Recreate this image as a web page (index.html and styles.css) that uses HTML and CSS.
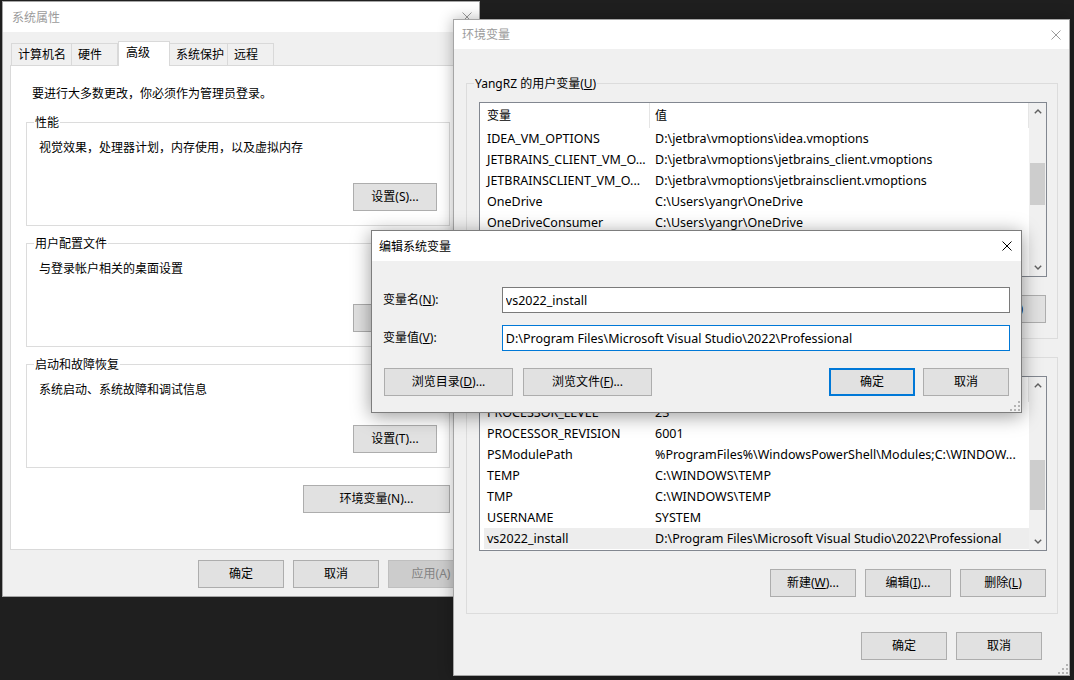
FILE: index.html
```html
<!DOCTYPE html>
<html lang="zh-CN">
<head>
    <meta charset="UTF-8">
    <title>环境变量</title>
    <link rel="stylesheet" href="styles.css">
</head>
<body>

    <!-- 系统属性 -->
    <div class="window win-sys inactive">
        <div class="titlebar">
            <span class="title">系统属性</span>
            <svg class="close" viewBox="0 0 10 10"><path d="M0.5 0.5L9.5 9.5M9.5 0.5L0.5 9.5"/></svg>
        </div>
        <div class="tabs">
            <div class="tab">计算机名</div>
            <div class="tab">硬件</div>
            <div class="tab active">高级</div>
            <div class="tab">系统保护</div>
            <div class="tab">远程</div>
        </div>
        <div class="tab-panel">
            <p class="note">要进行大多数更改，你必须作为管理员登录。</p>
            <div class="group sys-group">
                <span class="group-label">性能</span>
                <p>视觉效果，处理器计划，内存使用，以及虚拟内存</p>
                <div class="btn-row"><button class="btn btn-s">设置(S)...</button></div>
            </div>
            <div class="group sys-group">
                <span class="group-label">用户配置文件</span>
                <p>与登录帐户相关的桌面设置</p>
                <div class="btn-row"><button class="btn btn-s">设置(E)...</button></div>
            </div>
            <div class="group sys-group">
                <span class="group-label">启动和故障恢复</span>
                <p>系统启动、系统故障和调试信息</p>
                <div class="btn-row"><button class="btn btn-s">设置(T)...</button></div>
            </div>
            <div class="btn-row env-btn-row">
                <button class="btn btn-env">环境变量(N)...</button>
            </div>
        </div>
        <div class="btn-row sys-footer">
            <button class="btn">确定</button>
            <button class="btn">取消</button>
            <button class="btn" disabled>应用(A)</button>
        </div>
    </div>

    <!-- 环境变量 -->
    <div class="window win-env inactive">
        <div class="titlebar">
            <span class="title">环境变量</span>
            <svg class="close" viewBox="0 0 10 10"><path d="M0.5 0.5L9.5 9.5M9.5 0.5L0.5 9.5"/></svg>
        </div>

        <div class="group env-group">
            <span class="group-label">YangRZ 的用户变量(<u>U</u>)</span>
            <div class="list">
                <div class="list-main">
                    <div class="list-head">
                        <div class="head-name">变量</div>
                        <div class="head-value">值</div>
                    </div>
                    <div class="row"><span class="cell-name">IDEA_VM_OPTIONS</span><span class="cell-value">D:\jetbra\vmoptions\idea.vmoptions</span></div>
                    <div class="row"><span class="cell-name">JETBRAINS_CLIENT_VM_O...</span><span class="cell-value">D:\jetbra\vmoptions\jetbrains_client.vmoptions</span></div>
                    <div class="row"><span class="cell-name">JETBRAINSCLIENT_VM_O...</span><span class="cell-value">D:\jetbra\vmoptions\jetbrainsclient.vmoptions</span></div>
                    <div class="row"><span class="cell-name">OneDrive</span><span class="cell-value">C:\Users\yangr\OneDrive</span></div>
                    <div class="row"><span class="cell-name">OneDriveConsumer</span><span class="cell-value">C:\Users\yangr\OneDrive</span></div>
                    <div class="row"><span class="cell-name">Path</span><span class="cell-value">C:\Users\yangr\AppData\Local\Microsoft\WindowsApps;</span></div>
                    <div class="row"><span class="cell-name">TEMP</span><span class="cell-value">C:\Users\yangr\AppData\Local\Temp</span></div>
                </div>
                <div class="scrollbar">
                    <div class="sb-arrow"><svg class="chev" viewBox="0 0 8 5"><polyline points="0.8,4.3 4,1.1 7.2,4.3"/></svg></div>
                    <div class="sb-track"><div class="sb-thumb thumb-user"></div></div>
                    <div class="sb-arrow"><svg class="chev" viewBox="0 0 8 5"><polyline points="0.8,0.7 4,3.9 7.2,0.7"/></svg></div>
                </div>
            </div>
            <div class="btn-row list-btns">
                <button class="btn">新建(<u>N</u>)...</button>
                <button class="btn">编辑(<u>E</u>)...</button>
                <button class="btn">删除(<u>D</u>)</button>
            </div>
        </div>

        <div class="group env-group">
            <span class="group-label">系统变量(<u>S</u>)</span>
            <div class="list">
                <div class="list-main">
                    <div class="list-head">
                        <div class="head-name">变量</div>
                        <div class="head-value">值</div>
                    </div>
                    <div class="row"><span class="cell-name">PROCESSOR_LEVEL</span><span class="cell-value">23</span></div>
                    <div class="row"><span class="cell-name">PROCESSOR_REVISION</span><span class="cell-value">6001</span></div>
                    <div class="row"><span class="cell-name">PSModulePath</span><span class="cell-value">%ProgramFiles%\WindowsPowerShell\Modules;C:\WINDOW...</span></div>
                    <div class="row"><span class="cell-name">TEMP</span><span class="cell-value">C:\WINDOWS\TEMP</span></div>
                    <div class="row"><span class="cell-name">TMP</span><span class="cell-value">C:\WINDOWS\TEMP</span></div>
                    <div class="row"><span class="cell-name">USERNAME</span><span class="cell-value">SYSTEM</span></div>
                    <div class="row selected"><span class="cell-name">vs2022_install</span><span class="cell-value">D:\Program Files\Microsoft Visual Studio\2022\Professional</span></div>
                </div>
                <div class="scrollbar">
                    <div class="sb-arrow"><svg class="chev" viewBox="0 0 8 5"><polyline points="0.8,4.3 4,1.1 7.2,4.3"/></svg></div>
                    <div class="sb-track"><div class="sb-thumb thumb-system"></div></div>
                    <div class="sb-arrow"><svg class="chev" viewBox="0 0 8 5"><polyline points="0.8,0.7 4,3.9 7.2,0.7"/></svg></div>
                </div>
            </div>
            <div class="btn-row list-btns">
                <button class="btn">新建(<u>W</u>)...</button>
                <button class="btn">编辑(<u>I</u>)...</button>
                <button class="btn">删除(<u>L</u>)</button>
            </div>
        </div>

        <div class="btn-row env-footer">
            <button class="btn">确定</button>
            <button class="btn">取消</button>
        </div>

        <svg class="grip" viewBox="0 0 10 10">
            <rect x="8" y="0" width="2" height="2"/><rect x="8" y="4" width="2" height="2"/><rect x="4" y="4" width="2" height="2"/>
            <rect x="8" y="8" width="2" height="2"/><rect x="4" y="8" width="2" height="2"/><rect x="0" y="8" width="2" height="2"/>
        </svg>
    </div>

    <!-- 编辑系统变量 -->
    <div class="window win-edit">
        <div class="titlebar">
            <span class="title">编辑系统变量</span>
            <svg class="close" viewBox="0 0 10 10"><path d="M0.5 0.5L9.5 9.5M9.5 0.5L0.5 9.5"/></svg>
        </div>
        <div class="edit-body">
            <div class="field-row">
                <label class="field-label">变量名(<u>N</u>):</label>
                <input class="field-input" type="text" value="vs2022_install">
            </div>
            <div class="field-row">
                <label class="field-label">变量值(<u>V</u>):</label>
                <input class="field-input focused" type="text" value="D:\Program Files\Microsoft Visual Studio\2022\Professional">
            </div>
            <div class="btn-row edit-btns">
                <button class="btn btn-wide">浏览目录(<u>D</u>)...</button>
                <button class="btn btn-wide">浏览文件(<u>F</u>)...</button>
                <button class="btn btn-default">确定</button>
                <button class="btn">取消</button>
            </div>
        </div>

        <svg class="grip" viewBox="0 0 10 10">
            <rect x="8" y="0" width="2" height="2"/><rect x="8" y="4" width="2" height="2"/><rect x="4" y="4" width="2" height="2"/>
            <rect x="8" y="8" width="2" height="2"/><rect x="4" y="8" width="2" height="2"/><rect x="0" y="8" width="2" height="2"/>
        </svg>
    </div>

</body>
</html>
```

FILE: styles.css
```css
* {
    margin: 0;
    padding: 0;
    box-sizing: border-box;
}

body {
    position: relative;
    width: 1074px;
    height: 680px;
    overflow: hidden;
    background-color: #1f1f1f; /* escritorio */
    font-family: "Noto Sans", "Noto Sans CJK SC", sans-serif;
    font-size: 12px;
    color: #000;
}

u {
    text-decoration: underline;
    text-underline-offset: 1px;
}

/* ventanas */
.window {
    position: absolute;
    display: flex;
    flex-direction: column;
    background-color: #f0f0f0;
    border: 1px solid #a5a5a5;
}

.titlebar {
    flex: none;
    display: flex;
    align-items: center;
    justify-content: space-between;
    background-color: #fff;
}

.title {
    line-height: 16px;
    padding-top: 1px;
}

.close {
    width: 10px;
    height: 10px;
    fill: none;
    stroke: #000;
    stroke-width: 1;
}

.inactive .title {
    color: #9b9b9b;
}

.inactive .close {
    stroke: #9b9b9b;
}

.grip {
    position: absolute;
    right: 1px;
    bottom: 1px;
    width: 10px;
    height: 10px;
    fill: #b4b4b4;
}

/* botones */
.btn-row {
    display: flex;
}

.btn {
    flex: none;
    width: 86px;
    height: 28px;
    padding: 0;
    font: inherit;
    line-height: 26px;
    color: #000;
    text-align: center;
    background-color: #e1e1e1;
    border: 1px solid #adadad;
    border-radius: 0;
}

.btn:disabled {
    color: #838383;
    background-color: #cccccc;
    border-color: #bfbfbf;
}

.btn-default {
    border: 2px solid #0078d7;
    line-height: 24px;
}

.btn-s {
    width: 84px;
}

.btn-env {
    width: 147px;
}

.btn-wide {
    width: 129px;
}

/* grupos */
.group {
    position: relative;
    border: 1px solid #dcdcdc;
}

.group-label {
    position: absolute;
    top: -8px;
    left: 7px;
    padding: 0 1px;
    line-height: 16px;
    background-color: #f0f0f0;
    white-space: nowrap;
}

/* ---------- 系统属性 ---------- */
.win-sys {
    left: 2px;
    top: 1px;
    width: 478px;
    height: 596px;
}

.win-sys .titlebar {
    height: 30px;
    padding: 0 7px 0 9px;
}

.tabs {
    position: relative;
    z-index: 1;
    display: flex;
    align-items: flex-end;
    height: 24px;
    margin: 9px 0 0 8px;
}

.tab {
    height: 22px;
    padding-left: 6px;
    line-height: 21px;
    background-color: #f0f0f0;
    border: 1px solid #d9d9d9;
    border-bottom: none;
    margin-left: -1px;
    white-space: nowrap;
}

.tab:nth-child(1) { width: 61px; margin-left: 0; }
.tab:nth-child(2) { width: 47px; }
.tab:nth-child(4) { width: 59px; }
.tab:nth-child(5) { width: 47px; }

.tab.active {
    width: 52px;
    height: 25px;
    margin-left: 0;
    margin-bottom: -1px;
    padding-left: 7px;
    line-height: 21px;
    background-color: #fff;
}

.tab-panel {
    width: 462px;
    height: 485px;
    margin-left: 7px;
    background-color: #fff;
    border: 1px solid #d9d9d9;
}

.note {
    margin-top: 20px;
    padding-left: 21px;
    line-height: 16px;
}

.sys-group {
    width: 424px;
    height: 104px;
    margin: 20px 0 0 15px;
    padding: 17px 12px 0;
}

.sys-group + .sys-group {
    margin-top: 17px;
}

.sys-group p {
    line-height: 16px;
}

.sys-group .group-label {
    background-color: #fff;
}

.sys-group .btn-row {
    justify-content: flex-end;
    margin-top: 27px;
}

.env-btn-row {
    width: 424px;
    margin: 17px 0 0 15px;
    justify-content: flex-end;
}

.sys-footer {
    gap: 9px;
    margin-top: 10px;
    padding-left: 195px;
}

/* ---------- 环境变量 ---------- */
.win-env {
    left: 453px;
    top: 19px;
    width: 617px;
    height: 657px;
    box-shadow: 0 0 14px rgba(0, 0, 0, 0.3);
}

.win-env .titlebar {
    height: 29px;
    padding: 0 8px;
}

.env-group {
    width: 592px;
    height: 256px;
    margin: 34px 0 0 12px;
    padding: 18px 0 0 12px;
}

.env-group + .env-group {
    height: 257px;
    margin-top: 18px;
}

.list {
    display: flex;
    width: 568px;
    height: 175px;
    font-size: 12.5px;
    background-color: #fff;
    border: 1px solid #828790;
    overflow: hidden;
}

.list-main {
    flex: 1;
    min-width: 0;
}

.list-head {
    display: flex;
    height: 25px;
    line-height: 25px;
    font-size: 12px;
}

.head-name {
    width: 170px;
    padding-left: 7px;
    border-right: 1px solid #e5e5e5;
}

.head-value {
    flex: 1;
    padding-left: 5px;
    border-right: 1px solid #e5e5e5;
}

.row {
    display: flex;
    height: 21px;
    margin-left: 4px;
    line-height: 22px;
    white-space: nowrap;
}

.row.selected {
    background-color: #ededed;
}

.cell-name {
    width: 165px;
    padding: 0 1px 0 3px;
    overflow: hidden;
}

.cell-value {
    flex: 1;
    min-width: 0;
    padding-left: 6px;
    overflow: hidden;
}

.scrollbar {
    display: flex;
    flex-direction: column;
    width: 17px;
    background-color: #f0f0f0;
}

.sb-arrow {
    display: flex;
    align-items: center;
    justify-content: center;
    height: 17px;
}

.chev {
    width: 8px;
    height: 5px;
    fill: none;
    stroke: #606060;
    stroke-width: 1.4;
}

.sb-track {
    flex: 1;
}

.sb-thumb {
    margin: 0 1px;
    background-color: #cdcdcd;
}

.thumb-user {
    height: 42px;
    margin-top: 43px;
}

.thumb-system {
    height: 50px;
    margin-top: 66px;
}

.list-btns {
    width: 568px;
    gap: 9px;
    margin-top: 18px;
    padding-right: 1px;
    justify-content: flex-end;
}

.env-footer {
    gap: 9px;
    margin-top: 18px;
    padding-right: 27px;
    justify-content: flex-end;
}

/* ---------- 编辑系统变量 ---------- */
.win-edit {
    left: 371px;
    top: 230px;
    width: 651px;
    height: 183px;
    border-color: #7d7d7d;
    box-shadow: 0 3px 18px rgba(0, 0, 0, 0.4);
}

.win-edit .titlebar {
    height: 30px;
    padding: 0 9px 0 7px;
}

.edit-body {
    padding: 26px 11px 0;
}

.field-row {
    display: flex;
    align-items: center;
    height: 26px;
}

.field-row + .field-row {
    margin-top: 12px;
}

.field-label {
    width: 119px;
    line-height: 16px;
}

.field-input {
    width: 509px;
    height: 26px;
    padding: 0 3px;
    font: inherit;
    font-size: 12.5px;
    color: #000;
    background-color: #fff;
    border: 1px solid #7a7a7a;
    border-radius: 0;
    outline: none;
}

.field-input.focused {
    border-color: #0078d7;
}

.edit-btns {
    margin-top: 17px;
    padding: 0 1px;
}

.edit-btns .btn-wide + .btn-wide {
    margin-left: 10px;
}

.edit-btns .btn-default {
    margin-left: auto;
    margin-right: 8px;
}
```
